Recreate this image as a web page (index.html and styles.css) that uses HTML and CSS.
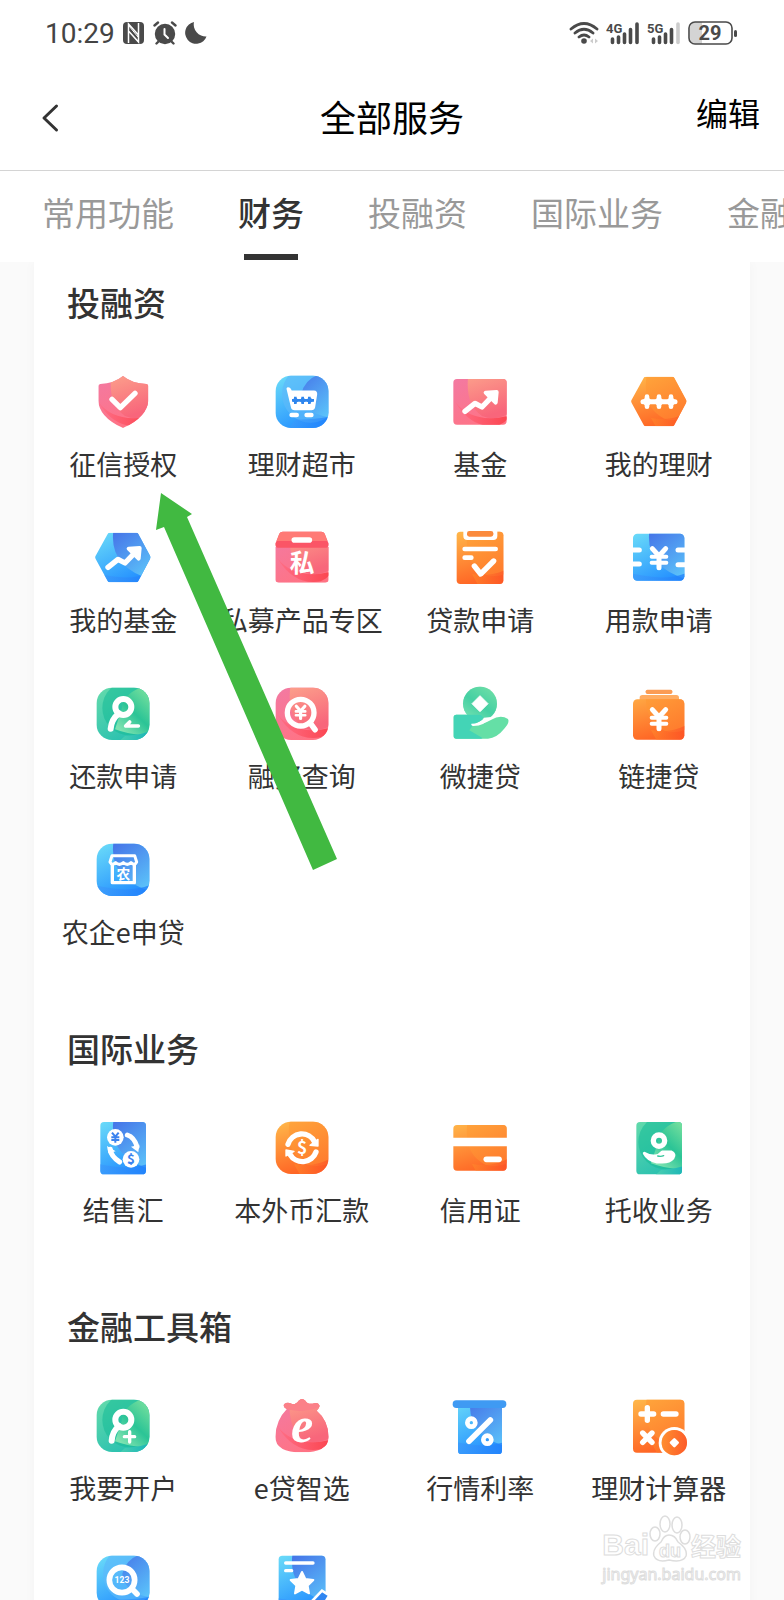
FILE: index.html
```html
<!DOCTYPE html>
<html lang="zh-CN">
<head>
<meta charset="utf-8">
<meta name="viewport" content="width=device-width, initial-scale=1">
<title>全部服务</title>
<link rel="stylesheet" href="styles.css">
</head>
<body>
<svg class="defs" aria-hidden="true">
  <defs>
    <linearGradient id="b1" x1="0" y1="0" x2=".5" y2="1"><stop offset="0" stop-color="#6fe0f8"/><stop offset="1" stop-color="#2490ff"/></linearGradient>
    <linearGradient id="b2" x1=".2" y1="0" x2=".8" y2="1"><stop offset="0" stop-color="#4676e8"/><stop offset="1" stop-color="#5cc4fa"/></linearGradient>
    <linearGradient id="b3" x1="0" y1="0" x2="1" y2="0"><stop offset="0" stop-color="#3f9dfb"/><stop offset="1" stop-color="#1f7dfb"/></linearGradient>
    <linearGradient id="r1" x1="0" y1="0" x2=".5" y2="1"><stop offset="0" stop-color="#f27aa4"/><stop offset="1" stop-color="#ff7384"/></linearGradient>
    <linearGradient id="r2" x1="0" y1="0" x2=".3" y2="1"><stop offset="0" stop-color="#fca38c"/><stop offset="1" stop-color="#f8667b"/></linearGradient>
    <linearGradient id="r3" x1="0" y1="0" x2="1" y2="0"><stop offset="0" stop-color="#ff6f87"/><stop offset="1" stop-color="#fb4550"/></linearGradient>
    <linearGradient id="o1" x1="0" y1="0" x2=".3" y2="1"><stop offset="0" stop-color="#ffbc4c"/><stop offset="1" stop-color="#ff6424"/></linearGradient>
    <linearGradient id="o2" x1="0" y1="0" x2=".6" y2="1"><stop offset="0" stop-color="#ffa238"/><stop offset="1" stop-color="#ff8330"/></linearGradient>
    <linearGradient id="o3" x1="0" y1="0" x2="1" y2="0"><stop offset="0" stop-color="#ff8a2c"/><stop offset="1" stop-color="#fc4826"/></linearGradient>
    <linearGradient id="g1" x1="0" y1="0" x2=".6" y2="1"><stop offset="0" stop-color="#67dcab"/><stop offset="1" stop-color="#27bfb0"/></linearGradient>
    <linearGradient id="g2" x1="1" y1="0" x2=".3" y2="1"><stop offset="0" stop-color="#8be7a0"/><stop offset=".6" stop-color="#2bc496"/><stop offset="1" stop-color="#7de2b0"/></linearGradient>
    <linearGradient id="g3" x1="0" y1="0" x2="1" y2="0"><stop offset="0" stop-color="#4bd0b0"/><stop offset="1" stop-color="#17b3b8"/></linearGradient>
    <clipPath id="sq"><rect x="5" y="5" width="158" height="157" rx="46"/></clipPath>
    <clipPath id="hex"><path d="M44 8H124Q128 8 130 12L165 77Q168 82 165 87L130 153Q128 157 124 157H44Q40 157 38 153L2 87Q-1 82 2 77L38 12Q40 8 44 8Z"/></clipPath>
    <clipPath id="shield"><path d="M84 6Q112 29 154 30Q160 31 160 36V80Q156 128 88 160Q84 163 80 160Q12 128 10 80V36Q10 31 16 30Q56 29 84 6Z"/></clipPath>
    <clipPath id="wide"><rect x="4" y="15" width="160" height="137" rx="11"/></clipPath>
    <clipPath id="box"><path d="M4 50H164V148Q164 158 154 158H14Q4 158 4 148Z"/></clipPath>
    <clipPath id="tall"><rect x="14" y="5" width="140" height="157" rx="11"/></clipPath>
    <clipPath id="narrow"><rect x="16" y="6" width="137" height="157" rx="11"/></clipPath>
    <clipPath id="ticket"><rect x="6" y="11" width="154" height="141" rx="13"/></clipPath>
    <clipPath id="wallet"><rect x="6" y="40" width="154" height="121" rx="13"/></clipPath>
    <clipPath id="bag"><path d="M38 34Q25 26 31 18Q40 10 54 18Q66 20 74 8Q84 -2 94 8Q102 20 116 17Q132 12 136 22Q138 30 128 38Q162 66 164 116Q164 163 84 163Q4 163 4 116Q6 66 38 34Z"/></clipPath>
    <clipPath id="banner"><path d="M18 28H150V158Q150 168 140 168H28Q18 168 18 158Z"/></clipPath>
    <clipPath id="calc"><rect x="6" y="5" width="154" height="159" rx="12"/></clipPath>
    <g id="blue"><rect width="168" height="168" fill="url(#b1)"/><path d="M56 -4Q38 110 168 148V-4Z" fill="url(#b2)"/><path d="M30 136Q110 152 168 128V168H0V130Z" fill="url(#b3)" opacity=".75"/></g>
    <g id="blue2"><rect width="168" height="168" fill="url(#b1)"/><circle cx="110" cy="60" r="86" fill="#5cb9fa" opacity=".7"/><path d="M82 60Q92 14 140 0H168V130Q90 120 82 60Z" fill="url(#b2)" opacity=".9"/><path d="M66 136Q110 138 168 128V168H40Z" fill="url(#b3)" opacity=".6"/></g>
    <g id="red"><rect width="168" height="168" fill="url(#r1)"/><path d="M10 84Q60 150 168 126Q168 142 140 154Q60 168 10 84Z" fill="url(#r3)"/><path d="M50 -4Q36 90 90 126Q130 142 168 120V-4Z" fill="url(#r2)"/></g>
    <g id="orange"><rect width="168" height="168" fill="url(#o1)"/><path d="M48 -4Q30 100 100 134Q140 144 168 128V-4Z" fill="url(#o2)" opacity=".8"/><path d="M60 132Q120 142 168 116V168H80Z" fill="url(#o3)" opacity=".6"/></g>
    <g id="green"><rect width="168" height="168" fill="url(#g1)"/><circle cx="104" cy="66" r="82" fill="#19bc97" opacity=".6"/><path d="M80 70Q84 14 168 -4V138Q130 156 60 130Z" fill="url(#g2)"/><path d="M90 150Q130 150 168 134V168H70Z" fill="url(#g3)"/></g>
    <g id="yen" fill="none" stroke="#fff" stroke-linecap="round" stroke-linejoin="round"><path d="M64 56L84 78L104 56M84 80V113" stroke-width="15"/><path d="M62 80H106M62 98H106" stroke-width="12"/></g>
    <g id="beads"><path d="M36 83H132" stroke-width="15"/><path d="M48 68V98M84 68V98M120 68V98" stroke-width="14"/><path d="M38 83L48 73L58 83L48 93ZM74 83L84 73L94 83L84 93ZM110 83L120 73L130 83L120 93Z" stroke-width="10"/></g>
    <g id="trend" fill="none" stroke="#fff" stroke-linejoin="round" stroke-linecap="round"><path d="M39 112L69 88L90 99L120 68" stroke-width="16"/><path d="M101 56L134 54L131 86Z" fill="#fff" stroke-width="12"/></g>
  </defs>
</svg>

<div class="app">
  <div class="status">
    <div class="status-group">
      <span class="clock">10:29</span>
      <svg width="22" height="22" viewBox="0 0 22 22"><rect x="0" y="0" width="21" height="22" rx="4" fill="#4a4a4a"/><path d="M5.500 21V2L15 12.500V15M15.500 1V20L6 9.500" fill="none" stroke="#fff" stroke-width="1.500"/><path d="M6 4L15 15" stroke="#fff" stroke-width="1"/></svg>
      <svg width="24" height="24" viewBox="0 0 24 24" fill="none" stroke="#4a4a4a" stroke-width="2.400" stroke-linecap="round"><circle cx="12" cy="13" r="9" fill="#4a4a4a"/><path d="M1.500 4.500L5 1.500M22.500 4.500L19 1.500M5 21L3.500 22.500M19 21L20.500 22.500"/><path d="M11.500 8V13.500L15 17" stroke="#fff" stroke-width="2"/></svg>
      <svg width="22" height="22" viewBox="0 0 22 22"><path d="M9 0A12 12 0 0 0 21.500 14.500A11 11 0 1 1 9 0Z" fill="#4a4a4a"/></svg>
    </div>
    <div class="status-group status-right">
      <svg width="30" height="24" viewBox="0 0 30 24" fill="none" stroke="#4a4a4a" stroke-width="2.800" stroke-linecap="round"><path d="M2 8Q15 -3 28 8M6 12Q15 4.500 24 12M10 16Q15 12 20 16"/><circle cx="15" cy="20" r="2.800" fill="#4a4a4a" stroke="none"/><path d="M24 17.500L21 20L24 22.500ZM26 17.500L29 20L26 22.500Z" fill="#ccc" stroke="none"/></svg>
      <svg width="34" height="24" viewBox="0 0 34 24"><text class="net" x="0" y="12">4G</text><path d="M6.500 18V21.500M12.500 16V21.500M18.500 13V21.500M24.500 8.500V21.500M31 3V21.500" stroke="#4a4a4a" stroke-width="3.600" stroke-linecap="round"/></svg>
      <svg width="34" height="24" viewBox="0 0 34 24"><text class="net" x="0" y="12">5G</text><path d="M6.500 18V21.500M12.500 16V21.500M18.500 13V21.500M24.500 8.500V21.500" stroke="#4a4a4a" stroke-width="3.600" stroke-linecap="round"/><path d="M31 3V21.500" stroke="#ccc" stroke-width="3.600" stroke-linecap="round"/></svg>
      <svg width="50" height="26" viewBox="0 0 50 26"><path d="M8 2H14V24H8Q2 24 2 18V8Q2 2 8 2Z" fill="#d4d4d4"/><rect x="1" y="2" width="43" height="22" rx="6" fill="none" stroke="#4a4a4a" stroke-width="1.600"/><rect x="46" y="10" width="3" height="7" rx="1.500" fill="#4a4a4a"/><text class="battery" x="22" y="20" text-anchor="middle">29</text></svg>
    </div>
  </div>

  <header class="header">
    <button class="back" type="button" aria-label="返回"><svg width="18" height="30" viewBox="0 0 18 30"><path d="M15.500 3L3 15L15.500 27" fill="none" stroke="#333" stroke-width="3" stroke-linecap="round" stroke-linejoin="round"/></svg></button>
    <h1 class="title">全部服务</h1>
    <button class="edit" type="button">编辑</button>
  </header>

  <nav class="tabs">
    <a class="tab" href="#common">常用功能</a>
    <a class="tab tab-active" href="#finance" aria-current="true">财务</a>
    <a class="tab" href="#invest">投融资</a>
    <a class="tab" href="#global">国际业务</a>
    <a class="tab" href="#tools">金融工具箱</a>
  </nav>

  <main class="main">
    <div class="card">
      <section class="section" id="invest">
        <h2 class="section-title">投融资</h2>
        <div class="grid">
          <a class="item" href="#"><svg class="icon" viewBox="0 0 168 168"><g clip-path="url(#shield)"><use href="#red"/></g><path d="M51 76L76 101L120 58" fill="none" stroke="#fff" stroke-width="16" stroke-linecap="round" stroke-linejoin="round"/></svg><span class="label">征信授权</span></a>
          <a class="item" href="#"><svg class="icon" viewBox="0 0 168 168"><g clip-path="url(#sq)"><use href="#blue2"/></g><path d="M42 44Q47 44 50 54H120Q126 54 125 61L119 99Q118 104 112 104H62Q56 104 55 98L42 44Z" fill="#fff" stroke="#fff" stroke-width="9" stroke-linejoin="round"/><path d="M54 79H120M64 68V90M86 68V90M106 68V90" stroke="#2f86ee" stroke-width="8"/><path d="M55 79L64 71L74 79L64 87ZM77 79L86 71L96 79L86 87ZM97 79L106 71L118 79L106 87Z" fill="#2f86ee" stroke="#2f86ee" stroke-width="3"/><path d="M53 123H68M98 123H112" stroke="#fff" stroke-width="14" stroke-linecap="round"/></svg><span class="label">理财超市</span></a>
          <a class="item" href="#"><svg class="icon" viewBox="0 0 168 168"><g clip-path="url(#wide)"><use href="#red"/></g><use href="#trend"/></svg><span class="label">基金</span></a>
          <a class="item" href="#"><svg class="icon" viewBox="0 0 168 168"><g clip-path="url(#hex)"><use href="#orange"/></g><use href="#beads" fill="#fff" stroke="#fff" stroke-linecap="round" stroke-linejoin="round"/></svg><span class="label">我的理财</span></a>

          <a class="item" href="#"><svg class="icon" viewBox="0 0 168 168"><g clip-path="url(#hex)"><use href="#blue"/></g><use href="#trend"/></svg><span class="label">我的基金</span></a>
          <a class="item" href="#"><svg class="icon" viewBox="0 0 168 168"><g clip-path="url(#box)"><use href="#red"/></g><path d="M26 5H142Q149 5 152 11L164 41Q164 53 156 53H12Q4 53 4 41L16 11Q19 5 26 5Z" fill="#fb5566"/><path d="M26 5H142Q149 5 152 11L160 33H8L16 11Q19 5 26 5Z" fill="#ff7a76"/><path d="M61 30H106" stroke="#fff" stroke-width="17" stroke-linecap="round"/><text class="glyph" x="84" y="127" font-size="74">私</text></svg><span class="label">私募产品专区</span></a>
          <a class="item" href="#"><svg class="icon" viewBox="0 0 168 168"><g clip-path="url(#tall)"><use href="#orange"/></g><path d="M34 1H136V18Q136 30 124 30H46Q34 30 34 18Z" fill="#fff"/><rect x="45" y="3" width="79" height="17" rx="7" fill="#fb8a3c"/><path d="M38 57H131M38 83H58" stroke="#fff" stroke-width="14" stroke-linecap="round"/><path d="M67 108L86 132L125 93" fill="none" stroke="#fff" stroke-width="16" stroke-linecap="round" stroke-linejoin="round"/></svg><span class="label">贷款申请</span></a>
          <a class="item" href="#"><svg class="icon" viewBox="0 0 168 168"><g clip-path="url(#ticket)"><use href="#blue"/></g><path d="M0 60H25M0 102H25M141 60H168M141 104H168" stroke="#fff" stroke-width="15" stroke-linecap="round"/><use href="#yen"/></svg><span class="label">用款申请</span></a>

          <a class="item" href="#"><svg class="icon" viewBox="0 0 168 168"><g clip-path="url(#sq)"><use href="#green"/></g><g fill="none" stroke="#fff" stroke-linecap="round" stroke-linejoin="round"><circle cx="85" cy="63" r="24" stroke-width="18"/><path d="M72 82Q49 100 47 128" stroke-width="18"/><path d="M104 108L92 120H130" stroke-width="11"/></g></svg><span class="label">还款申请</span></a>
          <a class="item" href="#"><svg class="icon" viewBox="0 0 168 168"><g clip-path="url(#sq)"><use href="#red"/></g><circle cx="80" cy="80" r="40" fill="none" stroke="#fff" stroke-width="16"/><path d="M110 113L123 131" stroke="#fff" stroke-width="17" stroke-linecap="round"/><use href="#yen" transform="translate(26 25) scale(.64)"/></svg><span class="label">融资查询</span></a>
          <a class="item" href="#"><svg class="icon" viewBox="0 0 168 168"><circle cx="84" cy="53" r="51" fill="url(#g2)"/><circle cx="84" cy="53" r="51" fill="#5fdcb0" opacity=".5"/><path d="M84 29L108 53L84 77L60 53Z" fill="#fff" stroke="#fff" stroke-width="3" stroke-linejoin="round"/><path d="M13 86H84Q94 88 93 96Q91 107 60 117Q95 115 118 101Q146 85 168 99Q174 109 158 127Q134 157 108 158H13Q5 158 5 150V94Q5 86 13 86Z" fill="#65dfa6"/><path d="M13 86H84Q94 88 93 96Q91 105 66 113L52 133L90 155Q94 158 80 158H13Q5 158 5 150V94Q5 86 13 86Z" fill="#43d4b6"/><path d="M58 113Q86 113 96 95L118 93Q96 121 62 120Q56 117 58 113Z" fill="#fff"/></svg><span class="label">微捷贷</span></a>
          <a class="item" href="#"><svg class="icon" viewBox="0 0 168 168"><rect x="44" y="11" width="80" height="13" rx="5" fill="#fb9c55"/><rect x="26" y="27" width="118" height="22" rx="8" fill="#ffac62"/><g clip-path="url(#wallet)"><use href="#orange"/></g><use href="#yen" y="15"/></svg><span class="label">链捷贷</span></a>

          <a class="item" href="#"><svg class="icon" viewBox="0 0 168 168"><g clip-path="url(#sq)"><use href="#blue"/></g><g fill="none" stroke="#fff" stroke-linejoin="round"><path d="M52 66V122H118V66" stroke-width="10"/><path d="M51 41H119L125 60Q119 72 108 62Q97 72 85 62Q73 72 62 62Q51 72 45 60Z" stroke-width="9"/></g><text class="glyph" x="85" y="110" font-size="41">农</text></svg><span class="label">农企e申贷</span></a>
        </div>
      </section>

      <section class="section" id="global">
        <h2 class="section-title">国际业务</h2>
        <div class="grid">
          <a class="item" href="#"><svg class="icon" viewBox="0 0 168 168"><g clip-path="url(#narrow)"><use href="#blue"/></g><circle cx="61" cy="52" r="25" fill="#fff"/><circle cx="108" cy="118" r="25" fill="#fff"/><g fill="none" stroke="#3b83ee" stroke-width="6"><path d="M51 38L61 50L71 38M61 50V68M49 52H73M49 60H73"/></g><text class="glyph glyph-blue" x="108" y="132" font-size="40">$</text><g fill="none" stroke="#fff" stroke-width="15" stroke-linecap="round" stroke-linejoin="round"><path d="M97 45Q118 52 126 80"/><path d="M46 88Q48 110 74 126"/></g><path d="M108 80L133 74L130 97ZM36 78L62 94L40 100Z" fill="#fff"/></svg><span class="label">结售汇</span></a>
          <a class="item" href="#"><svg class="icon" viewBox="0 0 168 168"><g clip-path="url(#sq)"><use href="#orange"/></g><g fill="none" stroke="#fff" stroke-width="16" stroke-linecap="round"><path d="M42 73A43 43 0 0 1 122 66"/><path d="M126 96A43 43 0 0 1 48 103"/></g><path d="M108 76L132 58V78ZM60 94L36 90V108Z" fill="#fff" stroke="#fff" stroke-width="4" stroke-linejoin="round"/><text class="glyph" x="84" y="102" font-size="52">$</text></svg><span class="label">本外币汇款</span></a>
          <a class="item" href="#"><svg class="icon" viewBox="0 0 168 168"><g clip-path="url(#wide)"><use href="#orange"/></g><path d="M2 66H166" stroke="#fff" stroke-width="25"/><path d="M103 118H141" stroke="#fff" stroke-width="17" stroke-linecap="round"/></svg><span class="label">信用证</span></a>
          <a class="item" href="#"><svg class="icon" viewBox="0 0 168 168"><g clip-path="url(#narrow)"><use href="#green"/></g><circle cx="84" cy="62" r="17" fill="none" stroke="#fff" stroke-width="16"/><path d="M40 100Q58 110 72 108Q84 108 94 96H120Q134 102 126 114Q116 126 94 126H78Q50 120 40 100Z" fill="#fff" stroke="#fff" stroke-width="9" stroke-linejoin="round"/><path d="M80 108Q90 111 98 107" fill="none" stroke="#36c79b" stroke-width="4" stroke-linecap="round"/></svg><span class="label">托收业务</span></a>
        </div>
      </section>

      <section class="section" id="tools">
        <h2 class="section-title">金融工具箱</h2>
        <div class="grid">
          <a class="item" href="#"><svg class="icon" viewBox="0 0 168 168"><g clip-path="url(#sq)"><use href="#green"/></g><g fill="none" stroke="#fff" stroke-linecap="round"><circle cx="85" cy="65" r="24" stroke-width="18"/><path d="M72 84Q52 100 50 128" stroke-width="18"/><path d="M88 116H119M104 101V132" stroke-width="10"/></g></svg><span class="label">我要开户</span></a>
          <a class="item" href="#"><svg class="icon" viewBox="0 0 168 168"><g clip-path="url(#bag)"><use href="#red"/><path d="M20 -4H150V22Q84 52 20 28Z" fill="#fb8088"/></g><text class="glyph glyph-serif" x="84" y="133" font-size="150">e</text></svg><span class="label">e贷智选</span></a>
          <a class="item" href="#"><svg class="icon" viewBox="0 0 168 168"><g clip-path="url(#banner)"><use href="#blue"/></g><rect x="2" y="7" width="161" height="23" rx="11" fill="#3f9af3"/><g fill="none" stroke="#fff"><path d="M115 66L51 130" stroke-width="17" stroke-linecap="round"/><circle cx="58" cy="74" r="12" stroke-width="14"/><circle cx="106" cy="125" r="12" stroke-width="14"/></g></svg><span class="label">行情利率</span></a>
          <a class="item" href="#"><svg class="icon" viewBox="0 0 168 168"><g clip-path="url(#calc)"><use href="#orange"/></g><path d="M30 48H68M49 29V67M97 48H135M35 105L63 133M63 105L35 133" stroke="#fff" stroke-width="16" stroke-linecap="round"/><circle cx="130" cy="134" r="47" fill="#fff"/><circle cx="130" cy="134" r="38" fill="url(#o2)"/><circle cx="130" cy="134" r="38" fill="url(#o3)" opacity=".7"/><path d="M130 124L140 134L130 144L120 134Z" fill="#fff" stroke="#fff" stroke-width="8" stroke-linejoin="round"/></svg><span class="label">理财计算器</span></a>

          <a class="item" href="#" aria-label="号码查询"><svg class="icon" viewBox="0 0 168 168"><g clip-path="url(#sq)"><use href="#blue2"/></g><circle cx="81" cy="78" r="38" fill="none" stroke="#fff" stroke-width="17"/><path d="M112 106L126 120" stroke="#fff" stroke-width="17" stroke-linecap="round"/><text class="glyph glyph-num" x="81" y="87" font-size="26">123</text></svg></a>
          <a class="item" href="#" aria-label="评价"><svg class="icon" viewBox="0 0 168 168"><g clip-path="url(#tall)"><use href="#blue"/></g><path d="M35 27H117M35 50H53" stroke="#fff" stroke-width="10" stroke-linecap="round"/><path d="M84 54L94 75L118 78L101 95L105 118L84 107L63 118L67 95L50 78L74 75Z" fill="#fff" stroke="#fff" stroke-width="6" stroke-linejoin="round"/><path d="M104 152L144 110L166 124L140 168H104Z" fill="#2f86f2" stroke="#fff" stroke-width="8"/></svg></a>
        </div>
      </section>
    </div>
  </main>

  <svg class="arrow" width="184" height="380" viewBox="0 0 184 380" aria-hidden="true"><path d="M7 0L38 21L33 24L183 366L159 377L10 34L2 37Z" fill="#41b941"/></svg>

  <div class="watermark">
    <div class="wm-brand">
      <span class="wm-name">Bai</span>
      <svg width="42" height="48" viewBox="0 0 42 48" fill="#fff" stroke="#ddd" stroke-width="1.500"><ellipse cx="6" cy="19" rx="5" ry="7"/><ellipse cx="16" cy="9" rx="5" ry="8"/><ellipse cx="28" cy="10" rx="5" ry="8"/><ellipse cx="36" cy="22" rx="5" ry="7"/><path d="M20 20Q26 20 29 27Q39 34 37 41Q34 48 20 45Q8 48 5 41Q3 34 12 27Q15 20 20 20Z"/><text class="wm-du" x="21" y="42" text-anchor="middle">du</text></svg>
      <span class="wm-cn">经验</span>
    </div>
    <div class="wm-url">jingyan.baidu.com</div>
  </div>
</div>
</body>
</html>
```
FILE: styles.css
```css
* { box-sizing: border-box; }

body {
  margin: 0;
  font-family: "Noto Sans CJK SC", sans-serif;
  color: #333;
  background: #fafafa;
}

a { color: inherit; text-decoration: none; }

button {
  border: 0;
  padding: 0;
  background: none;
  font: inherit;
  cursor: pointer;
}

.defs { position: absolute; width: 0; height: 0; }

.app {
  position: relative;
  display: flex;
  flex-direction: column;
  height: 100vh;
  overflow: hidden;
}

.status {
  flex: none;
  display: flex;
  justify-content: space-between;
  align-items: center;
  height: 66px;
  padding: 0 46px 0 45px;
  background: #fff;
}

.status-group { display: flex; align-items: center; gap: 8px; }
.status-right { gap: 7px; }
.status svg { display: block; }
.clock { padding-top: 2px; font: 400 28px/32px Roboto, sans-serif; color: #444; }
.net { font: 700 13px Roboto, sans-serif; fill: #4a4a4a; }
.battery { font: 700 20px Roboto, sans-serif; fill: #4a4a4a; }

.header {
  flex: none;
  display: grid;
  grid-template-columns: 1fr auto 1fr;
  align-items: center;
  height: 105px;
  padding: 0 24px 0 41px;
  background: #fff;
  border-bottom: 1px solid #d4d4d4;
}

.back { justify-self: start; display: flex; }
.title { margin: 0 0 0 -17px; padding-bottom: 4px; font-size: 36px; line-height: 48px; font-weight: 400; color: #000; }
.edit { justify-self: end; padding-bottom: 12px; font-size: 32px; line-height: 40px; color: #000; }

.tabs {
  flex: none;
  display: flex;
  gap: 64px;
  height: 91px;
  padding-left: 42px;
  background: #fff;
  overflow: hidden;
}

.tab {
  flex: none;
  position: relative;
  font-size: 33px;
  line-height: 82px;
  color: #999;
  white-space: nowrap;
}

.tab-active { font-weight: 500; color: #333; }

.tab-active::after {
  content: "";
  position: absolute;
  left: 6px;
  right: 6px;
  bottom: 2px;
  height: 6px;
  background: #333;
}

.main {
  flex: 1;
  min-height: 0;
  padding: 0 34px;
  overflow-y: auto;
  scrollbar-width: none;
}

.card {
  padding: 16px 2px 48px 0;
  background: #fff;
  box-shadow: 0 0 12px rgba(0, 0, 0, .03);
}

.section + .section { margin-top: 74px; }

.section-title {
  margin: 0 0 48px;
  padding-left: 33px;
  font-size: 33px;
  line-height: 48px;
  font-weight: 500;
}

.grid {
  display: grid;
  grid-template-columns: repeat(4, minmax(0, 1fr));
  row-gap: 48px;
}

.item {
  display: flex;
  flex-direction: column;
  align-items: center;
  gap: 16px;
}

.icon { display: block; width: 56px; height: 56px; overflow: visible; }
.label { font-size: 27px; line-height: 36px; white-space: nowrap; }

.glyph {
  font-family: "Noto Sans CJK SC", sans-serif;
  font-weight: 700;
  fill: #fff;
  text-anchor: middle;
}

.glyph-blue { fill: #3b83ee; }
.glyph-num { font-family: Roboto, sans-serif; }
.glyph-serif { font-family: "Liberation Serif", serif; font-style: italic; }

.arrow { position: absolute; left: 154px; top: 493px; }

.watermark {
  position: absolute;
  right: 43px;
  bottom: 15px;
  color: #fff;
  -webkit-text-stroke: 1px #ddd;
}

.wm-brand { display: flex; align-items: flex-end; }
.wm-brand svg { display: block; }
.wm-name { font: 700 30px/36px "Liberation Sans", sans-serif; }
.wm-cn { font-size: 25px; line-height: 36px; font-weight: 700; }
.wm-du { font: 700 18px "Liberation Sans", sans-serif; -webkit-text-stroke: 0; stroke-width: 1px; }
.wm-url { font: 400 16px/22px "Noto Sans", sans-serif; }
```
